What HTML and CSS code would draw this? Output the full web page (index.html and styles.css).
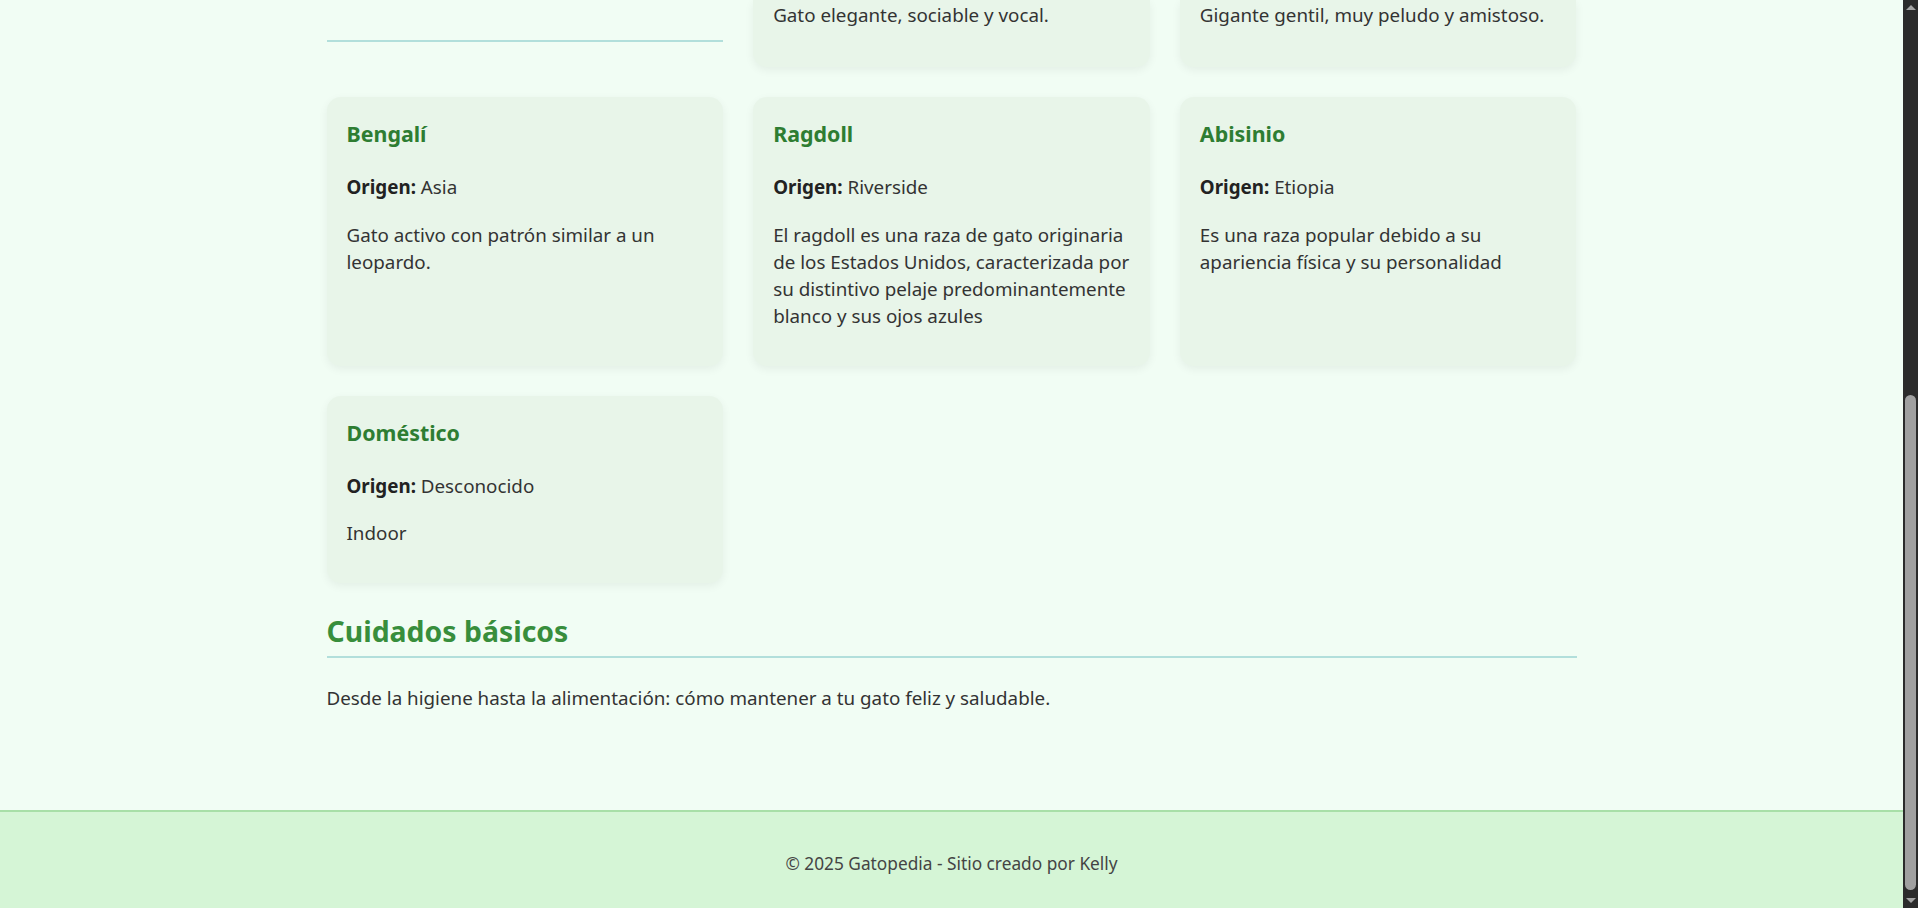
FILE: index.html
```html
<!DOCTYPE html>
<html lang="es">
<head>
<meta charset="utf-8">
<title>Gatopedia</title>
<link rel="stylesheet" href="styles.css">
</head>
<body>
<div class="page">
  <main class="container">
    <section class="breeds">
      <div class="cell-rule"></div>
      <article class="card card-cut">
        <p>Gato elegante, sociable y vocal.</p>
      </article>
      <article class="card card-cut">
        <p>Gigante gentil, muy peludo y amistoso.</p>
      </article>

      <article class="card">
        <h3>Bengalí</h3>
        <p><strong>Origen:</strong> Asia</p>
        <p>Gato activo con patrón similar a un leopardo.</p>
      </article>
      <article class="card">
        <h3>Ragdoll</h3>
        <p><strong>Origen:</strong> Riverside</p>
        <p>El ragdoll es una raza de gato originaria de los Estados Unidos, caracterizada por su distintivo pelaje predominantemente blanco y sus ojos azules</p>
      </article>
      <article class="card">
        <h3>Abisinio</h3>
        <p><strong>Origen:</strong> Etiopia</p>
        <p>Es una raza popular debido a su apariencia física y su personalidad</p>
      </article>

      <article class="card">
        <h3>Doméstico</h3>
        <p><strong>Origen:</strong> Desconocido</p>
        <p>Indoor</p>
      </article>
    </section>

    <section class="care">
      <h2>Cuidados básicos</h2>
      <p>Desde la higiene hasta la alimentación: cómo mantener a tu gato feliz y saludable.</p>
    </section>
  </main>

  <footer class="footer">
    <p>© 2025 Gatopedia - Sitio creado por Kelly</p>
  </footer>
</div>

<div class="scrollbar" aria-hidden="true">
  <div class="sb-arrow sb-up"></div>
  <div class="sb-track"><div class="sb-thumb"></div></div>
  <div class="sb-arrow sb-down"></div>
</div>
</body>
</html>
```

FILE: styles.css
```css
html, body {
  height: 100%;
  margin: 0;
  overflow: hidden;
}

body {
  background: #f1fdf4;
  color: #333333;
  font-family: "Noto Sans", "Open Sans", sans-serif;
  font-size: 18.8px;
  line-height: 27.2px;
}

.page {
  height: 100%;
  margin-right: 15px;
  display: flex;
  flex-direction: column;
}

.container {
  flex: 1;
  width: 1250px;
  margin: 0 auto;
}

.breeds {
  display: grid;
  grid-template-columns: repeat(3, 1fr);
  gap: 30px;
}

.cell-rule {
  height: 40px;
  border-bottom: 2px solid #b2dfdb;
  align-self: start;
}

.card {
  background: #e8f5e9;
  border-radius: 14px;
  padding: 21px 20px 18px;
  box-shadow: 0 3px 10px rgba(0, 0, 0, 0.06);
}

.card-cut {
  padding-top: 2px;
  padding-bottom: 19px;
  border-radius: 0 0 14px 14px;
}

.card p {
  margin: 0 0 20.2px;
}

.card p:last-child {
  margin-bottom: 17px;
}

.card-cut p:last-child {
  margin-bottom: 18.8px;
}

.card h3 {
  margin: 0 0 24.4px;
  color: #2e7d32;
  font-size: 21.4px;
  line-height: 32px;
  font-weight: 700;
}

.card strong {
  font-weight: 700;
  color: #222;
}

.care {
  padding-top: 30px;
}

.care h2 {
  margin: 0;
  padding-bottom: 7px;
  border-bottom: 2px solid #b2dfdb;
  color: #388e3c;
  font-size: 28.4px;
  line-height: 36px;
  font-weight: 700;
}

.care p {
  margin: 27.5px 0 0;
}

.footer {
  border-top: 2px solid #a8dfa8;
  background: #d5f5d6;
  color: #444;
  display: flex;
  align-items: center;
  justify-content: center;
  padding-top: 8px;
  box-sizing: border-box;
  height: 98px;
}

.footer p {
  margin: 0;
  font-size: 17.3px;
}

.scrollbar {
  position: fixed;
  top: 0;
  right: 0;
  bottom: 0;
  width: 15px;
  background: #2b2b2b;
  display: flex;
  flex-direction: column;
}

.sb-arrow {
  height: 15px;
  display: flex;
  justify-content: center;
  align-items: center;
}

.sb-up::before {
  content: "";
  border-left: 5px solid transparent;
  border-right: 5px solid transparent;
  border-bottom: 5px solid #a3a3a3;
}

.sb-down::before {
  content: "";
  border-left: 5px solid transparent;
  border-right: 5px solid transparent;
  border-top: 5px solid #a3a3a3;
}

.sb-track {
  flex: 1;
  display: flex;
  flex-direction: column;
  justify-content: flex-end;
  padding: 0 2px 3px;
}

.sb-thumb {
  height: 495px;
  background: #a0a0a0;
  border-radius: 6px;
}
```
